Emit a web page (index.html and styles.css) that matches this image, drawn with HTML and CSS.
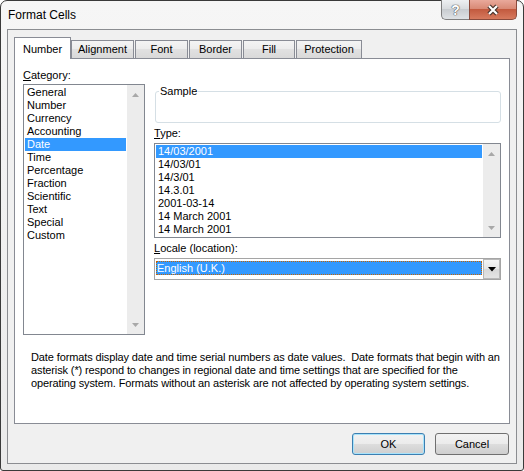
FILE: index.html
```html
<!DOCTYPE html>
<html><head>
<title>Format Cells</title>
<link rel="stylesheet" href="styles.css">
</head><body>
<div class="window">
<div class="titlebar">
<span class="caption">Format Cells</span>
<div class="capbtns">
<div class="capbtn help">?</div>
<div class="capbtn close">
<svg width="16" height="12" viewBox="0 0 16 12"><path d="M4 2 L12 10 M12 2 L4 10" stroke="#45302a" stroke-width="4.5"/><path d="M4 2 L12 10 M12 2 L4 10" stroke="#fff" stroke-width="2.2"/></svg>
</div>
</div>
</div>
<div class="client">
<div class="tabs">
<div class="tab sel w-number">Number</div>
<div class="tab w-align">Alignment</div>
<div class="tab w-font">Font</div>
<div class="tab w-border">Border</div>
<div class="tab w-fill">Fill</div>
<div class="tab w-prot">Protection</div>
</div>
<div class="panel">
<div class="cols">
<div class="catcol">
<div class="lbl"><u>C</u>ategory:</div>
<div class="listbox cat">
<div class="items">
<div class="item">General</div>
<div class="item">Number</div>
<div class="item">Currency</div>
<div class="item">Accounting</div>
<div class="item hi">Date</div>
<div class="item">Time</div>
<div class="item">Percentage</div>
<div class="item">Fraction</div>
<div class="item">Scientific</div>
<div class="item">Text</div>
<div class="item">Special</div>
<div class="item">Custom</div>
</div>
<div class="vscroll">
<div class="arrow"><svg width="9" height="6" viewBox="0 0 9 6"><path d="M1 5 L4.5 1 L8 5 Z" fill="#a8a8a8"/></svg></div>
<div class="arrow"><svg width="9" height="6" viewBox="0 0 9 6"><path d="M1 1 L4.5 5 L8 1 Z" fill="#a8a8a8"/></svg></div>
</div>
</div>
</div>
<div class="rightcol">
<fieldset class="sample"><legend>Sample</legend><div class="sample-body"></div></fieldset>
<div class="lbl gap-top"><u>T</u>ype:</div>
<div class="listbox type">
<div class="items">
<div class="item hi">14/03/2001</div>
<div class="item">14/03/01</div>
<div class="item">14/3/01</div>
<div class="item">14.3.01</div>
<div class="item">2001-03-14</div>
<div class="item">14 March 2001</div>
<div class="item">14 March 2001</div>
</div>
<div class="vscroll">
<div class="arrow"><svg width="9" height="6" viewBox="0 0 9 6"><path d="M1 5 L4.5 1 L8 5 Z" fill="#a8a8a8"/></svg></div>
<div class="arrow"><svg width="9" height="6" viewBox="0 0 9 6"><path d="M1 1 L4.5 5 L8 1 Z" fill="#a8a8a8"/></svg></div>
</div>
</div>
<div class="lbl gap-top"><u>L</u>ocale (location):</div>
<div class="combo">
<div class="combotext"><span>English (U.K.)</span></div>
<div class="dropbtn"><svg width="8" height="5" viewBox="0 0 8 5"><path d="M0 0 L8 0 L4 4.5 Z" fill="#000"/></svg></div>
</div>
</div>
</div>
<p class="desc">Date formats display date and time serial numbers as date values.&nbsp; Date formats that begin with an<br>asterisk (*) respond to changes in regional date and time settings that are specified for the<br>operating system. Formats without an asterisk are not affected by operating system settings.</p>
</div>
<div class="buttons">
<button class="btn def">OK</button>
<button class="btn cancel">Cancel</button>
</div>
</div>
</div>
</body></html>
```

FILE: styles.css
```css
body {margin: 0; background: #fff; font-family: "Liberation Sans", Arial, sans-serif; font-size: 11px; color: #000;}
.window {box-sizing: border-box; width: 524px; height: 471px; border: 1px solid #3a3a3a; border-radius: 7px 7px 3px 3px; background: linear-gradient(to bottom, #f6f6f6, #eaeaea); padding: 0 6px 6px 6px; display: flex; flex-direction: column;}
.titlebar {height: 28px; display: flex; align-items: flex-start; justify-content: space-between; flex-shrink: 0;}
.caption {margin-top: 7px; padding-left: 1px; line-height: 15px; font-size: 12px;}
.capbtns {display: flex; margin-top: -1px;}
.capbtn {box-sizing: border-box; height: 20px; display: flex; align-items: center; justify-content: center; border: 1px solid #7e7e7e; border-top: none;}
.help {width: 28px; border-right: none; border-radius: 0 0 0 5px; background: linear-gradient(to bottom, #eef0f2, #d9dcdf 45%, #c8ccd0 50%, #dfe2e5); color: #fff; font-weight: bold; font-size: 14px; text-shadow: 0 0 1px #555, 0 0 1px #555, 0 0 1px #555;}
.close {width: 48px; border-color: #8a4a3c; border-radius: 0 0 5px 0; background: linear-gradient(to bottom, #e9a99b, #d98a76 45%, #c35a3f 50%, #d77a5e);}
.client {flex: 1; border: 1px solid #8b8d91; background: #f0f0f0; padding: 7px 6px 0 6px; display: flex; flex-direction: column;}
.tabs {display: flex; align-items: flex-end; height: 21px;}
.tab {box-sizing: border-box; height: 18px; line-height: 17px; text-align: center; border: 1px solid #898c95; border-bottom: none; background: linear-gradient(to bottom, #f4f4f4, #ececec 50%, #e1e1e1 50%, #d9d9d9); margin-left: 1px;}
.tab.sel {height: 22px; margin-left: 0; margin-bottom: -1px; background: #fff; position: relative; z-index: 1; line-height: 22px;}
.w-number {width: 57px;}
.w-align {width: 63px; margin-left: 0;}
.w-font {width: 53px;}
.w-border {width: 53px;}
.w-fill {width: 52px;}
.w-prot {width: 66px;}
.panel {box-sizing: border-box; width: 496px; height: 366px; border: 1px solid #898c95; background: #fff; padding: 9px 8px 0 8px;}
.cols {display: flex; gap: 9px;}
.catcol {width: 122px;}
.rightcol {width: 347px; padding-top: 16px;}
.lbl {line-height: 14px; margin-bottom: 2px;}
.gap-top {margin-top: 3px; margin-bottom: 3px;}
.listbox {box-sizing: border-box; border: 1px solid #828790; display: flex; background: #fff;}
.listbox.cat {height: 251px;}
.listbox.type {height: 95px;}
.items {flex: 1; padding: 1px;}
.item {height: 13px; line-height: 13px; padding-left: 2px; white-space: nowrap;}
.item.hi {background: #3399ff; color: #fff;}
.vscroll {width: 17px; background: #ececec; display: flex; flex-direction: column; justify-content: space-between;}
.arrow {height: 19px; display: flex; align-items: center; justify-content: center;}
.sample {box-sizing: border-box; margin: 0 0 0 1px; padding: 0; border: 1px solid #d5dfe5; border-radius: 3px; width: 346px;}
.sample legend {padding: 0 1px; margin-left: 3px; line-height: 14px;}
.sample-body {height: 24px;}
.combo {box-sizing: border-box; height: 22px; border: 1px solid #a5a5a5; display: flex; background: #fff;}
.combotext {flex: 1; padding: 2px 1px 0 1px;}
.combotext span {display: block; height: 14px; line-height: 14px; background: #3399ff; color: #fff; padding-left: 1px; outline: 1px dotted #c86400; outline-offset: -1px;}
.dropbtn {box-sizing: border-box; width: 17px; height: 20px; border: 1px solid #b8b8b8; background: linear-gradient(to bottom, #f4f4f4, #e6e6e6 50%, #d8d8d8 50%, #e4e4e4); display: flex; align-items: center; justify-content: center;}
.desc {margin: 16px 0 0 0; padding-left: 8px; line-height: 13px; white-space: nowrap; letter-spacing: -0.12px;}
.buttons {display: flex; justify-content: flex-end; gap: 10px; margin: 9px 1px 0 0;}
.btn {box-sizing: border-box; height: 22px; font-family: "Liberation Sans", Arial, sans-serif; font-size: 11px; color: #000; border: 1px solid #707070; border-radius: 3px; background: linear-gradient(to bottom, #f2f2f2, #ebebeb 50%, #dddddd 50%, #cfcfcf); padding: 0;}
.btn.def {width: 73px; border-color: #3c7fb1; box-shadow: inset 0 0 0 1px #a8e3fb;}
.btn.cancel {width: 74px;}
```
